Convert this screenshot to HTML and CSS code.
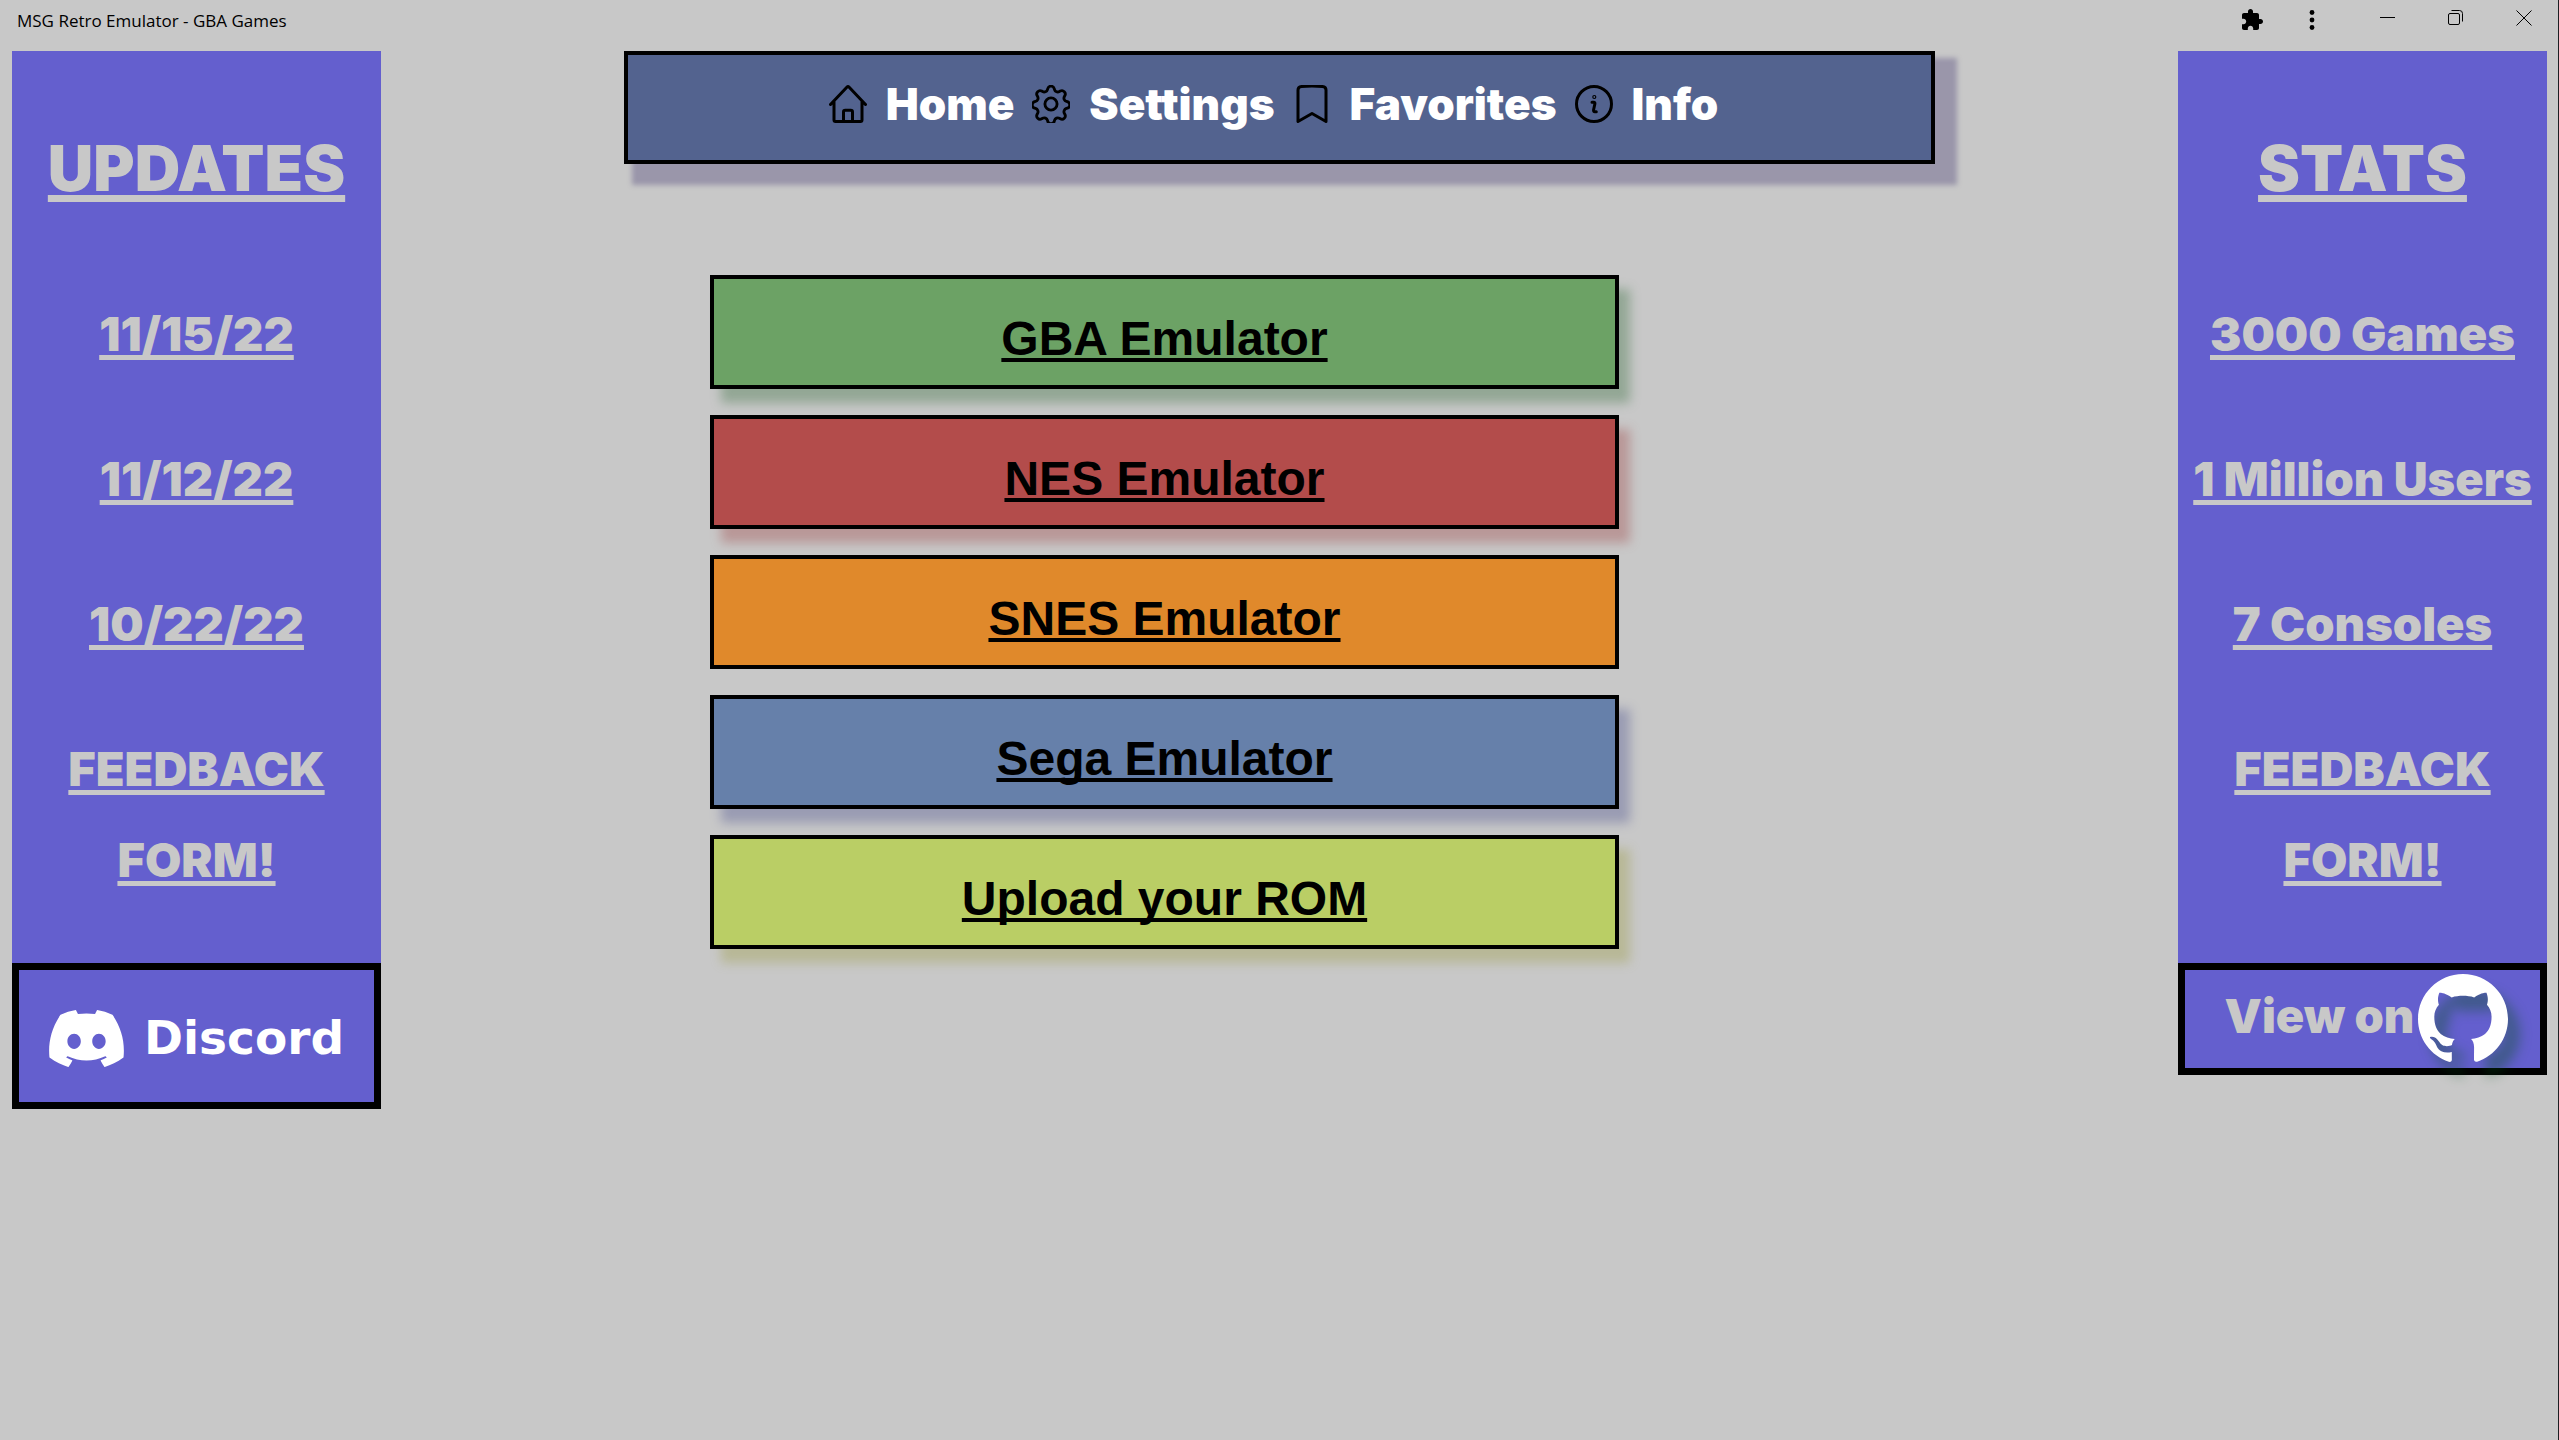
FILE: index.html
```html
<!DOCTYPE html>
<html lang="en">
<head>
<meta charset="utf-8">
<title>MSG Retro Emulator - GBA Games</title>
<link rel="stylesheet" href="styles.css">
</head>
<body>
<header class="titlebar">
  <span class="titlebar-name">MSG Retro Emulator - GBA Games</span>
  <div class="titlebar-tools">
    <button class="tool" aria-label="Extensions"><svg width="24" height="24" viewBox="0 0 24 24"><path d="M20.500 11H19V7c0-1.100-.9-2-2-2h-4V3.500C13 2.120 11.880 1 10.500 1S8 2.120 8 3.500V5H4c-1.100 0-1.990.9-1.990 2v3.800H3.500c1.490 0 2.700 1.210 2.700 2.700s-1.210 2.700-2.700 2.700H2V20c0 1.100.9 2 2 2h3.800v-1.500c0-1.490 1.210-2.700 2.700-2.700s2.700 1.210 2.700 2.700V22H17c1.100 0 2-.9 2-2v-4h1.500c1.380 0 2.500-1.120 2.500-2.500S21.880 11 20.500 11z"/></svg></button>
    <button class="tool" aria-label="Menu"><svg width="24" height="24" viewBox="0 0 24 24"><circle cx="12" cy="4.500" r="2.400"/><circle cx="12" cy="12" r="2.400"/><circle cx="12" cy="19.500" r="2.400"/></svg></button>
  </div>
  <div class="window-controls">
    <button class="control" aria-label="Minimize"><svg width="16" height="16" viewBox="0 0 16 16"><path d="M0 7.500h15"/></svg></button>
    <button class="control" aria-label="Restore"><svg width="16" height="16" viewBox="0 0 16 16"><rect x=".5" y="3.500" width="11" height="11" rx="1.500"/><path d="M3.500.5h8a3 3 0 0 1 3 3v8"/></svg></button>
    <button class="control" aria-label="Close"><svg width="16" height="16" viewBox="0 0 16 16"><path d="M.5.5l15 15M15.500.5l-15 15"/></svg></button>
  </div>
</header>

<div class="page">
  <aside class="side">
    <h2 class="side-title">UPDATES</h2>
    <ul class="side-list">
      <li><a href="#">11/15/22</a></li>
      <li><a href="#">11/12/22</a></li>
      <li><a href="#">10/22/22</a></li>
      <li><a href="#">FEEDBACK<br>FORM!</a></li>
    </ul>
    <a class="badge badge-discord" href="#">
      <svg width="75" height="57" viewBox="0 2.850 24 18.300" aria-hidden="true"><path d="M20.317 4.3698a19.7913 19.7913 0 00-4.8851-1.5152.0741.0741 0 00-.0785.0371c-.211.3753-.4447.8648-.6083 1.2495-1.8447-.2762-3.68-.2762-5.4868 0-.1636-.3933-.4058-.8742-.6177-1.2495a.077.077 0 00-.0785-.037 19.7363 19.7363 0 00-4.8852 1.515.0699.0699 0 00-.0321.0277C.5334 9.0458-.319 13.5799.0992 18.0578a.0824.0824 0 00.0312.0561c2.0528 1.5076 4.0413 2.4228 5.9929 3.0294a.0777.0777 0 00.0842-.0276c.4616-.6304.8731-1.2952 1.226-1.9942a.076.076 0 00-.0416-.1057c-.6528-.2476-1.2743-.5495-1.8722-.8923a.077.077 0 01-.0076-.1277c.1258-.0943.2517-.1923.3718-.2914a.0743.0743 0 01.0776-.0105c3.9278 1.7933 8.18 1.7933 12.0614 0a.0739.0739 0 01.0785.0095c.1202.099.246.1981.3728.2924a.077.077 0 01-.0066.1276 12.2986 12.2986 0 01-1.873.8914.0766.0766 0 00-.0407.1067c.3604.698.7719 1.3628 1.225 1.9932a.076.076 0 00.0842.0286c1.961-.6067 3.9495-1.5219 6.0023-3.0294a.077.077 0 00.0313-.0552c.5004-5.177-.8382-9.6739-3.5485-13.6604a.061.061 0 00-.0312-.0286zM8.02 15.3312c-1.1825 0-2.1569-1.0857-2.1569-2.419 0-1.3332.9555-2.4189 2.157-2.4189 1.2108 0 2.1757 1.0952 2.1568 2.419 0 1.3332-.9555 2.4189-2.1569 2.4189zm7.9748 0c-1.1825 0-2.1569-1.0857-2.1569-2.419 0-1.3332.9554-2.4189 2.1569-2.4189 1.2108 0 2.1757 1.0952 2.1568 2.419 0 1.3332-.946 2.4189-2.1568 2.4189Z"/></svg>
      <span>Discord</span>
    </a>
  </aside>

  <main class="main">
    <nav class="nav">
      <a href="#"><svg width="38" height="38" viewBox="0 0 38 38" aria-hidden="true"><path d="M1.500 19.500L17.800 2.200a1.700 1.700 0 0 1 2.400 0L36.500 19.500M5 16v19c0 .8.600 1.500 1.500 1.500h25c.9 0 1.500-.7 1.500-1.500V16M14.500 36V27c0-1 .8-1.800 1.800-1.800h5.400c1 0 1.800.8 1.800 1.800v9"/></svg>Home</a>
      <a href="#"><svg class="gear" width="38" height="38" viewBox="2 2 20 20" aria-hidden="true"><path d="M10.300 3.900c.5-1.700 2.900-1.700 3.400 0l.15.500c.32 1.100 1.580 1.620 2.580 1.070l.46-.25c1.560-.85 3.250.840 2.400 2.400l-.25.460c-.550 1-.030 2.260 1.070 2.580l.5.150c1.700.5 1.700 2.900 0 3.400l-.5.150c-1.100.320-1.620 1.580-1.070 2.580l.25.460c.850 1.560-.840 3.250-2.400 2.400l-.46-.25c-1-.550-2.260-.030-2.580 1.070l-.15.5c-.5 1.700-2.900 1.700-3.400 0l-.15-.5c-.320-1.100-1.580-1.620-2.580-1.070l-.46.25c-1.560.850-3.250-.840-2.400-2.400l.25-.46c.550-1 .030-2.260-1.070-2.580l-.5-.15c-1.700-.5-1.700-2.900 0-3.400l.5-.15c1.100-.320 1.620-1.580 1.070-2.580l-.25-.46c-.850-1.560.840-3.250 2.400-2.400l.46.25c1 .550 2.260.030 2.580-1.070Z"/><circle cx="12" cy="12" r="3.200"/></svg>Settings</a>
      <a href="#"><svg width="38" height="38" viewBox="0 0 38 38" aria-hidden="true"><path d="M5 36.500V5c0-2 1.500-3.300 3.500-3.500q10.500-1 21 0c2 .2 3.500 1.500 3.500 3.500v31.500L19 28.500Z"/></svg>Favorites</a>
      <a href="#"><svg width="38" height="38" viewBox="0 0 38 38" aria-hidden="true"><circle cx="19" cy="19" r="17.500"/><path d="M17 17.200h2c1 0 1 1 .8 2l-1.200 5.500c-.3 1.500.4 2 1.200 2h1.500"/><circle cx="19.300" cy="12" r=".6"/></svg>Info</a>
    </nav>
    <div class="systems">
      <a class="system green" href="#">GBA Emulator</a>
      <a class="system red" href="#">NES Emulator</a>
      <a class="system orange" href="#">SNES Emulator</a>
      <a class="system blue" href="#">Sega Emulator</a>
      <a class="system lime" href="#">Upload your ROM</a>
    </div>
  </main>

  <aside class="side">
    <h2 class="side-title">STATS</h2>
    <ul class="side-list">
      <li><a href="#">3000 Games</a></li>
      <li><a href="#">1 Million Users</a></li>
      <li><a href="#">7 Consoles</a></li>
      <li><a href="#">FEEDBACK<br>FORM!</a></li>
    </ul>
    <a class="badge badge-github" href="#">
      <span>View on</span>
      <svg width="90" height="90" viewBox="0 0 24 24" role="img" aria-label="GitHub"><path d="M12 .297c-6.630 0-12 5.373-12 12 0 5.303 3.438 9.800 8.205 11.385.6.113.82-.258.82-.577 0-.285-.01-1.040-.015-2.040-3.338.724-4.042-1.610-4.042-1.610C4.422 18.070 3.633 17.700 3.633 17.700c-1.087-.744.084-.729.084-.729 1.205.084 1.838 1.236 1.838 1.236 1.070 1.835 2.809 1.305 3.495.998.108-.776.417-1.305.76-1.605-2.665-.3-5.466-1.332-5.466-5.930 0-1.310.465-2.380 1.235-3.220-.135-.303-.54-1.523.105-3.176 0 0 1.005-.322 3.300 1.230.96-.267 1.980-.399 3-.405 1.020.006 2.040.138 3 .405 2.280-1.552 3.285-1.230 3.285-1.230.645 1.653.24 2.873.12 3.176.765.84 1.230 1.910 1.230 3.220 0 4.610-2.805 5.625-5.475 5.920.42.36.81 1.096.81 2.220 0 1.606-.015 2.896-.015 3.286 0 .315.21.69.825.57C20.565 22.092 24 17.592 24 12.297c0-6.627-5.373-12-12-12"/></svg>
    </a>
  </aside>
</div>
</body>
</html>
```
FILE: styles.css
```css
* {
  box-sizing: border-box;
}

body {
  margin: 0;
  min-height: 100vh;
  background: #c8c8c8;
  border-right: 1px solid #1c1f22;
  color: #000;
  font-family: Inter, "Open Sans", sans-serif;
}

/* Title bar */
.titlebar {
  position: relative;
  display: flex;
  align-items: flex-start;
  height: 51px;
  padding-left: 17px;
  font: 17px/42px "Open Sans", "Noto Sans", sans-serif;
}

/* Soft shade under the top edge of the window */
.titlebar::before {
  content: "";
  position: absolute;
  top: 0;
  left: 50%;
  width: 360px;
  height: 10px;
  margin-left: -180px;
  background: radial-gradient(closest-side at 50% 0, #bababa, #bebebe 60%, #c8c8c8);
}

.titlebar-name {
  flex: 1;
}

.titlebar-tools,
.window-controls {
  display: flex;
}

.titlebar-tools {
  margin-right: 12px;
}

.titlebar button {
  display: flex;
  align-items: center;
  justify-content: center;
  padding: 0;
  border: 0;
  background: none;
}

.tool {
  width: 60px;
  height: 40px;
}

.control {
  width: 68px;
  height: 35px;
}

.control svg {
  fill: none;
  stroke: #000;
}

/* Three columns */
.page {
  display: flex;
  align-items: flex-start;
  padding: 0 11px 0 12px;
}

.side {
  flex: 0 0 369px;
  background: #645fce;
  color: #c8c8c8;
  font-size: 47px;
  font-weight: 900;
  line-height: 91px;
  text-align: center;
}

.side a {
  color: inherit;
}

.side-title {
  margin: 0;
  padding: 55px 0 58px;
  font-size: 63px;
  font-weight: 900;
  line-height: 124px;
  text-decoration: underline 7px;
  text-underline-offset: 4px;
}

.side-list {
  display: grid;
  gap: 54px;
  margin: 0;
  padding: 0 0 58px;
  list-style: none;
}

.side-list a {
  text-decoration: underline 5px;
  text-decoration-skip-ink: none;
  text-underline-offset: 4px;
  white-space: nowrap;
}

.badge {
  display: flex;
  justify-content: center;
  border: 7px solid #000;
  text-decoration: none;
}

.badge svg {
  fill: #fff;
}

.badge-discord {
  align-items: center;
  gap: 20px;
  padding-top: 4px;
  height: 146px;
  font: bold 47px/60px "DejaVu Sans", sans-serif;
}

.side .badge-discord {
  color: #fff;
}

.badge-github {
  align-items: flex-start;
  gap: 4px;
  height: 112px;
  padding: 3px 0 0 8px;
  line-height: 86px;
}

.badge-github svg {
  filter: drop-shadow(12px 15px 6px rgba(0, 80, 20, 0.35));
}

/* Centre column */
.main {
  flex: 1;
  min-width: 0;
}

.nav {
  display: flex;
  justify-content: center;
  gap: 18px;
  width: 73%;
  margin: 0 auto;
  padding: 22px 12px 29px 0;
  border: 4px solid #000;
  background: #53638f;
  box-shadow: 15px 14px 5px 7px #9a96aa;
}

.nav a {
  display: flex;
  align-items: center;
  gap: 19px;
  color: #fff;
  font-size: 44px;
  font-weight: 900;
  line-height: 54px;
  text-decoration: none;
}

.nav svg {
  fill: none;
  stroke: #000;
  stroke-width: 3px;
  stroke-linecap: round;
  stroke-linejoin: round;
}

.nav .gear {
  stroke-width: 1.5px;
}

.systems {
  display: grid;
  gap: 26px;
  padding: 111px 31.1% 0 18.3%;
}

.system {
  padding: 30px 0 16px;
  border: 4px solid #000;
  color: #000;
  font: bold 48px/60px "Liberation Sans", Arial, sans-serif;
  text-align: center;
  text-decoration: underline 4px;
  text-decoration-skip-ink: none;
  text-underline-offset: 3px;
}

.green {
  background: #6ca265;
  box-shadow: 11px 14px 10px #93a795;
}

.red {
  background: #b34c4b;
  box-shadow: 11px 14px 10px #b99898;
}

.orange {
  background: #e0892b;
}

.blue {
  background: #6680aa;
  box-shadow: 11px 14px 10px #9a9cb3;
}

.lime {
  background: #bace65;
  box-shadow: 11px 14px 10px #b8b897;
}
```
